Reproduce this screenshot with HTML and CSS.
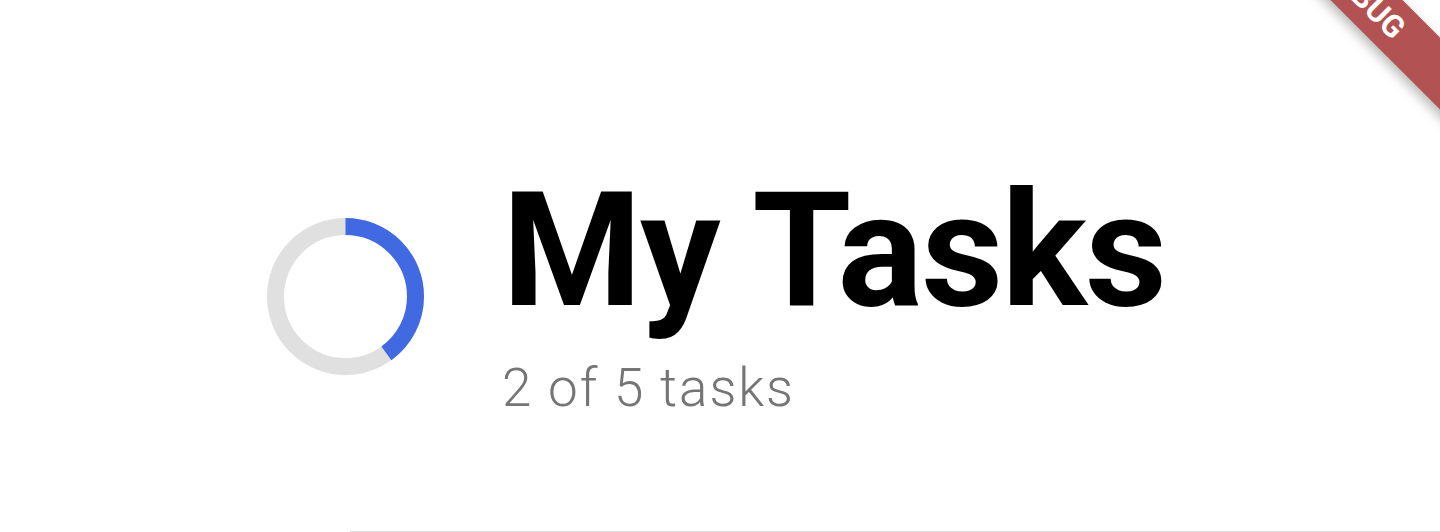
FILE: index.html
```html
<!DOCTYPE html>
<html lang="en">
<head>
<meta charset="utf-8">
<title>My Tasks</title>
<link rel="stylesheet" href="styles.css">
</head>
<body>
<div class="page">
  <header class="hero">
    <svg class="ring" width="157" height="157" viewBox="0 0 157 157" aria-hidden="true">
      <circle cx="78.5" cy="78.5" r="70" fill="none" stroke="#e0e0e0" stroke-width="17"/>
      <circle cx="78.5" cy="78.5" r="70" fill="none" stroke="#4169e1" stroke-width="17"
              stroke-dasharray="175.93 439.82" transform="rotate(-90 78.5 78.5)"/>
    </svg>
    <div class="heading">
      <h1 class="title">My Tasks</h1>
      <p class="subtitle">2 of 5 tasks</p>
    </div>
  </header>
  <div class="divider"></div>
</div>
<div class="debug-banner">DEBUG</div>
</body>
</html>
```
FILE: styles.css
```css
html, body {
  margin: 0;
  padding: 0;
  background: #ffffff;
}
body {
  width: 1440px;
  height: 532px;
  overflow: hidden;
  position: relative;
  font-family: Roboto, "Liberation Sans", sans-serif;
}
.page {
  height: 532px;
  display: flex;
  flex-direction: column;
}
.hero {
  display: flex;
  align-items: flex-start;
  padding-top: 171px;
  padding-left: 267px;
  gap: 78px;
}
.ring {
  display: block;
  margin-top: 47px;
  flex: none;
}
.heading {
  display: flex;
  flex-direction: column;
}
.title {
  margin: 0;
  font-size: 160px;
  line-height: 160px;
  font-weight: 700;
  letter-spacing: -2px;
  color: #000000;
  white-space: nowrap;
}
.subtitle {
  margin: 31px 0 0 0;
  font-size: 53px;
  line-height: 53px;
  font-weight: 300;
  letter-spacing: 1.9px;
  color: #757575;
  white-space: nowrap;
}
.divider {
  margin-top: auto;
  margin-left: 350px;
  height: 0;
  border-top: 1px solid #e0e0e0;
}
.debug-banner {
  position: absolute;
  left: 1217px;
  top: -25.5px;
  width: 300px;
  height: 51px;
  line-height: 51px;
  padding-right: 6px;
  box-sizing: border-box;
  transform: rotate(45deg);
  background: #b25252;
  box-shadow: 0 5px 12px rgba(0, 0, 0, 0.28);
  color: #ffffff;
  font-size: 31px;
  font-weight: 700;
  text-align: center;
}
```
